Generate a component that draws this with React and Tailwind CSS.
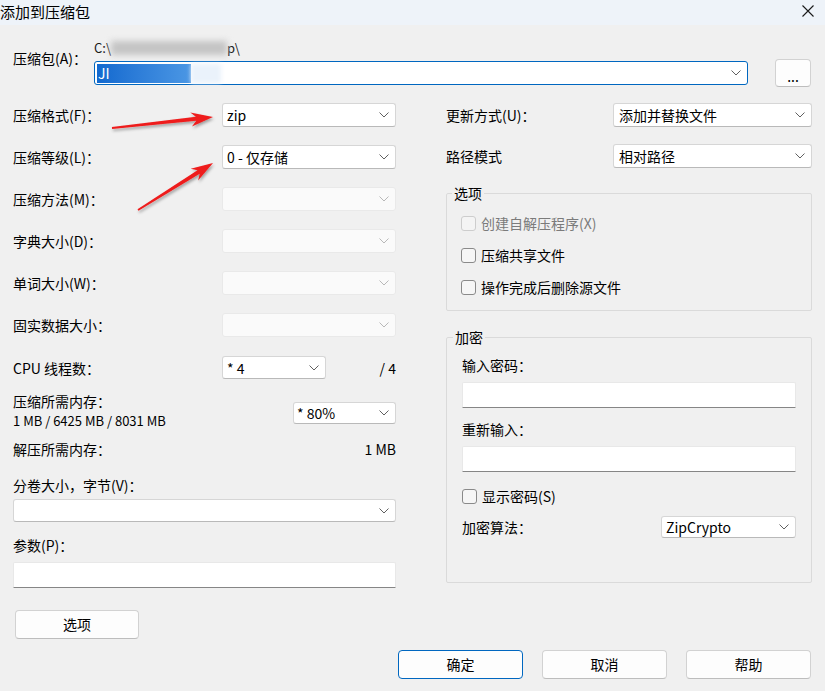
import React from "react";

const Chevron = ({ disabled }) => (
  <svg width="10" height="6" viewBox="0 0 10 6" className="shrink-0">
    <path d="M0.5 0.5 L5 5 L9.5 0.5" fill="none" stroke={disabled ? "#b8b8b8" : "#606060"} strokeWidth="1" />
  </svg>
);

function Combo({ value, className = "", disabled, pad = "pl-[4px]" }) {
  return (
    <div
      className={`flex items-center justify-between rounded-[3px] border pr-[6px] ${pad} ${
        disabled ? "bg-[#fafafa] border-[#e9e9e9]" : "bg-white border-[#d6d6d6] border-b-[#b9b9b9]"
      } ${className}`}
    >
      <span className="text-[14px] leading-[16px] text-black whitespace-nowrap">{value}</span>
      <Chevron disabled={disabled} />
    </div>
  );
}

function Check({ label, disabled }) {
  return (
    <div className="flex items-center h-[20px] gap-[5px]">
      <span
        className={`w-[15px] h-[15px] rounded-[3px] border ${
          disabled ? "border-[#cdcdcd] bg-[#f4f4f4]" : "border-[#8a8a8a] bg-[#f6f6f6]"
        }`}
      />
      <span className={`text-[14px] leading-[16px] ${disabled ? "text-[#7b7b7b]" : "text-black"}`}>{label}</span>
    </div>
  );
}

const Input = ({ className = "" }) => (
  <div className={`bg-white border border-[#e8e8e8] border-b-[#868686] rounded-t-[2px] ${className}`} />
);

const Label = ({ children, className = "" }) => (
  <div className={`text-[14px] leading-[16px] text-black whitespace-nowrap ${className}`}>{children}</div>
);

function Button({ children, primary, className = "" }) {
  return (
    <div
      className={`flex items-center justify-center rounded-[4px] border bg-[#fdfdfd] text-[14px] text-black ${
        primary ? "border-[#0067c0]" : "border-[#d2d2d2] border-b-[#bdbdbd]"
      } ${className}`}
    >
      {children}
    </div>
  );
}

export default function App() {
  return (
    <div className="relative w-[825px] h-[691px] overflow-hidden bg-[#f0f0f0] text-black font-['Noto_Sans_CJK_SC',sans-serif]">
      {/* title bar */}
      <div className="flex items-center justify-between h-[25px] bg-[#eef3f9]">
        <span className="text-[15px] leading-[18px] -mt-[1px]">添加到压缩包</span>
        <svg width="12" height="12" viewBox="0 0 12 12" className="mr-[11px] -mt-[4px]">
          <path d="M0.5 0.5 L11.5 11.5 M11.5 0.5 L0.5 11.5" stroke="#1a1a1a" strokeWidth="1.1" />
        </svg>
      </div>

      <div className="px-[13px]">
        {/* archive row */}
        <div className="flex pt-[15px]">
          <Label className="w-[81px] mt-[10px]">压缩包(A)：</Label>
          <div className="w-[654px]">
            <div className="flex items-center h-[16px] text-[13px] leading-[16px] text-[#1a1a1a]">
              <span>C:\</span>
              <span className="inline-block w-[116px] h-[14px] bg-[#c4c4c4] blur-[3px]" />
              <span>p\</span>
            </div>
            <div className="flex items-center justify-between mt-[5px] h-[24px] rounded-[3px] border border-[#0067c0] bg-white pl-[2px] pr-[6px]">
              <div className="flex items-center">
                <span className="flex items-center h-[19px] w-[94px] bg-linear-to-r from-[#1169cf] to-[#4b97e4] text-white text-[14px] leading-[16px] pl-[1px]">
                  JI
                </span>
                <span className="inline-block w-[30px] h-[19px] bg-[#eaf2fb] blur-[2px]" />
              </div>
              <Chevron />
            </div>
          </div>
          <Button className="ml-[27px] mt-[19px] w-[36px] h-[28px] text-[12px] leading-none pt-[6px]">...</Button>
        </div>

        {/* two columns */}
        <div className="flex mt-[16px]">
          {/* left */}
          <div className="flex flex-col w-[383px]">
            <div className="flex flex-col gap-[18px]">
              <div className="flex items-center justify-between h-[24px]">
                <Label>压缩格式(F)：</Label>
                <Combo value="zip" className="w-[174px] h-[24px]" />
              </div>
              <div className="flex items-center justify-between h-[24px]">
                <Label>压缩等级(L)：</Label>
                <Combo value="0 - 仅存储" className="w-[174px] h-[24px]" />
              </div>
              <div className="flex items-center justify-between h-[24px]">
                <Label>压缩方法(M)：</Label>
                <Combo value="" disabled className="w-[174px] h-[24px]" />
              </div>
              <div className="flex items-center justify-between h-[24px]">
                <Label>字典大小(D)：</Label>
                <Combo value="" disabled className="w-[174px] h-[24px]" />
              </div>
              <div className="flex items-center justify-between h-[24px]">
                <Label>单词大小(W)：</Label>
                <Combo value="" disabled className="w-[174px] h-[24px]" />
              </div>
              <div className="flex items-center justify-between h-[24px]">
                <Label>固实数据大小：</Label>
                <Combo value="" disabled className="w-[174px] h-[24px]" />
              </div>
            </div>

            <div className="flex items-center h-[23px] mt-[19px]">
              <Label className="w-[209px]">CPU 线程数：</Label>
              <Combo value="* 4" className="w-[104px] h-[23px]" />
              <span className="flex-1 text-right text-[14px] leading-[16px]">/ 4</span>
            </div>

            <div className="flex justify-between mt-[14px]">
              <div className="flex flex-col gap-[4px]">
                <Label>压缩所需内存：</Label>
                <span className="text-[13px] leading-[16px]">1 MB / 6425 MB / 8031 MB</span>
              </div>
              <Combo value="* 80%" className="w-[103px] h-[22px] mt-[9px]" pad="pl-[3px]" />
            </div>

            <div className="flex justify-between mt-[12px]">
              <Label>解压所需内存：</Label>
              <span className="text-[14px] leading-[16px]">1 MB</span>
            </div>

            <Label className="mt-[20px]">分卷大小，字节(V)：</Label>
            <Combo value="" className="w-full h-[23px] mt-[6px]" />

            <Label className="mt-[15px]">参数(P)：</Label>
            <Input className="w-full h-[26px] mt-[9px]" />

            <Button className="w-[124px] h-[29px] mt-[22px] ml-[2px]">选项</Button>
          </div>

          {/* right */}
          <div className="flex flex-col w-[366px] ml-[50px]">
            <div className="flex items-center justify-between h-[24px]">
              <Label>更新方式(U)：</Label>
              <Combo value="添加并替换文件" className="w-[199px] h-[24px]" pad="pl-[5px]" />
            </div>
            <div className="flex items-center justify-between h-[24px] mt-[17px]">
              <Label>路径模式</Label>
              <Combo value="相对路径" className="w-[199px] h-[24px]" pad="pl-[5px]" />
            </div>

            <fieldset className="mt-[17px] border border-[#dadada] rounded-[2px]">
              <legend className="ml-[5px] px-[2px] text-[14px] leading-[16px]">选项</legend>
              <div className="flex flex-col gap-[12px] pl-[14px] pt-[12px] pb-[13px]">
                <Check label="创建自解压程序(X)" disabled />
                <Check label="压缩共享文件" />
                <Check label="操作完成后删除源文件" />
              </div>
            </fieldset>

            <fieldset className="mt-[18px] border border-[#dadada] rounded-[2px]">
              <legend className="ml-[6px] px-[2px] text-[14px] leading-[16px]">加密</legend>
              <div className="flex flex-col px-[15px] pt-[10px] pb-[44px]">
                <Label className="h-[20px] leading-[20px]">输入密码：</Label>
                <Input className="h-[26px] mt-[7px]" />
                <Label className="h-[20px] leading-[20px] mt-[11px]">重新输入：</Label>
                <Input className="h-[26px] mt-[7px]" />
                <div className="mt-[14px]">
                  <Check label="显示密码(S)" />
                </div>
                <div className="flex items-center justify-between h-[22px] mt-[10px]">
                  <Label>加密算法：</Label>
                  <Combo value="ZipCrypto" className="w-[135px] h-[22px]" />
                </div>
              </div>
            </fieldset>
          </div>
        </div>

        {/* bottom buttons */}
        <div className="flex justify-end gap-[19px] mt-[11px] pr-[1px]">
          <Button primary className="w-[125px] h-[29px]">确定</Button>
          <Button className="w-[125px] h-[29px]">取消</Button>
          <Button className="w-[125px] h-[29px]">帮助</Button>
        </div>
      </div>

      {/* red annotation arrows */}
      <svg width="825" height="691" className="absolute left-0 top-0 pointer-events-none">
        <defs>
          <filter id="sh" x="-20%" y="-20%" width="140%" height="140%">
            <feDropShadow dx="1" dy="2" stdDeviation="1.5" floodColor="#000" floodOpacity="0.35" />
          </filter>
        </defs>
        <g fill="#ee1c1c" filter="url(#sh)">
          <polygon points="111.9,127 195.9,116.8 190.3,112.4 213,117 191.9,126.4 196.3,120.8 112.1,129" />
          <polygon points="137.5,209.2 197.5,170.3 190.7,168.8 213,163 198.1,180.6 199.7,173.7 138.5,210.8" />
        </g>
      </svg>
    </div>
  );
}
